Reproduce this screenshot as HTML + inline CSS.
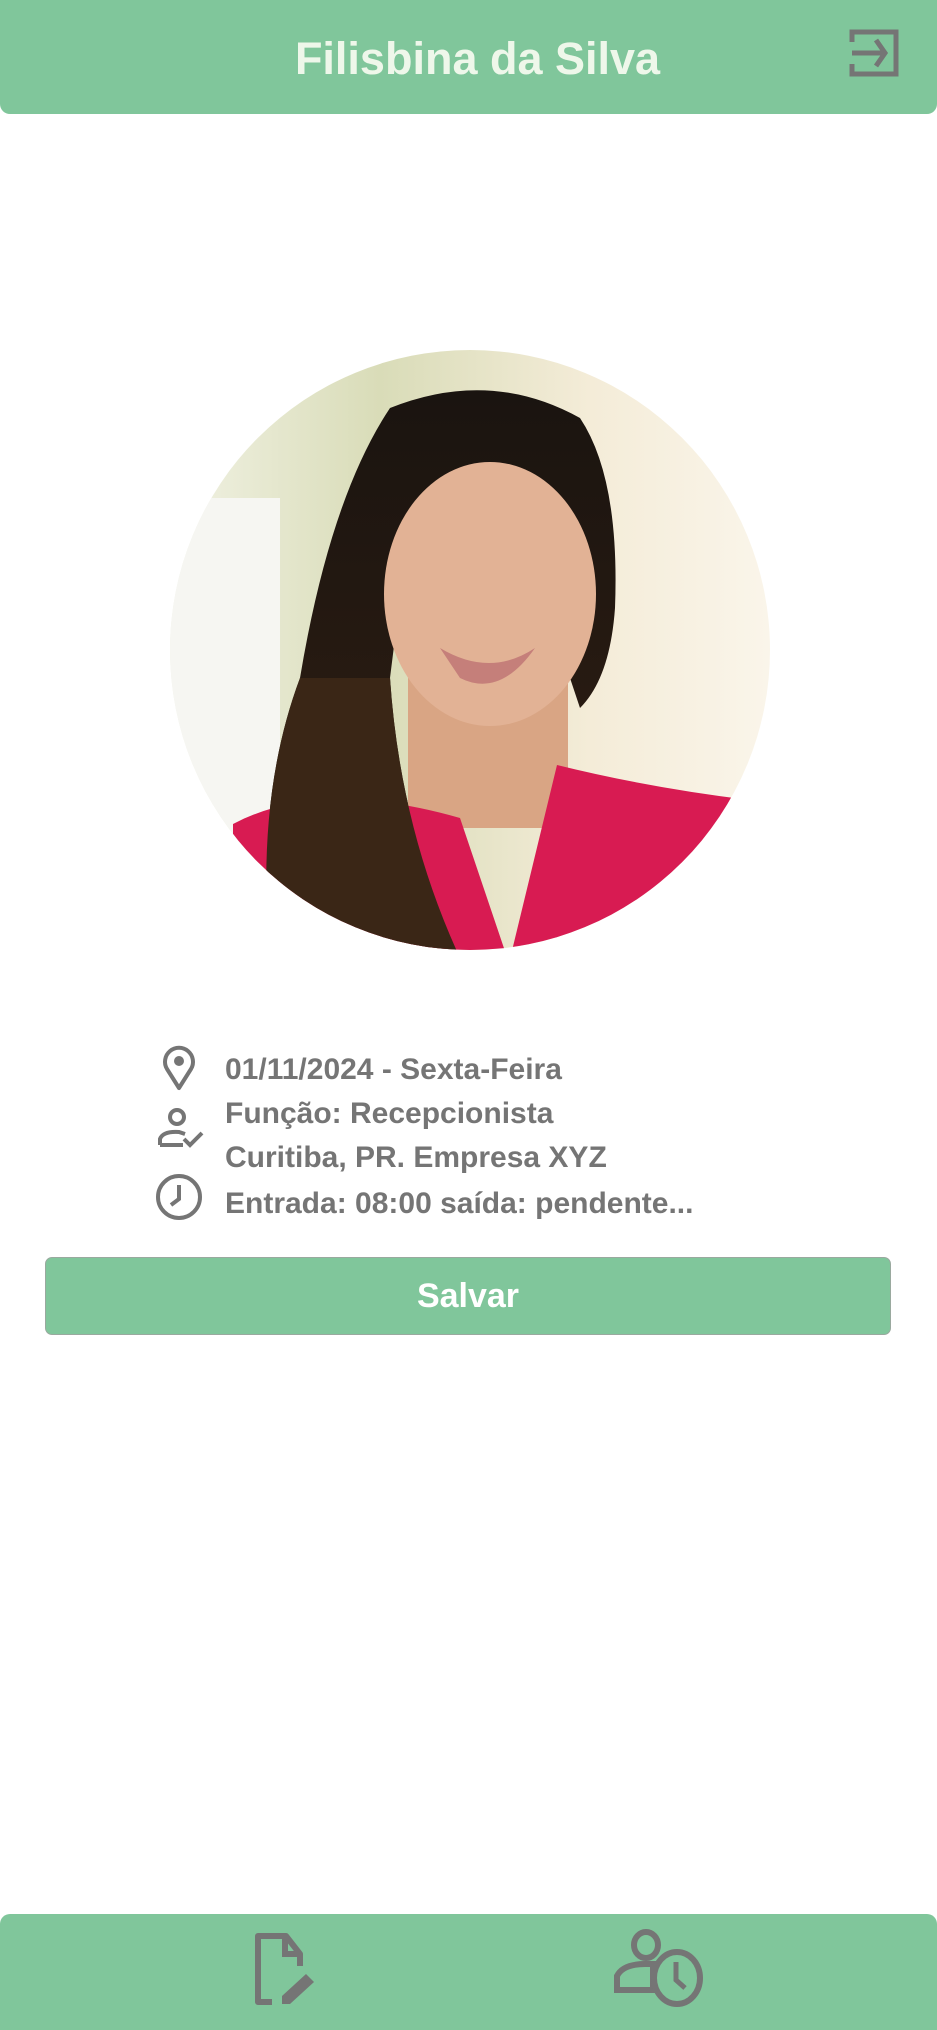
<!DOCTYPE html>
<html><head><meta charset="utf-8">
<style>
html,body{margin:0;padding:0;background:#fff;width:937px;height:2030px;overflow:hidden;font-family:"Liberation Sans",Arial,sans-serif;}
.hdr{position:absolute;left:0;top:0;width:937px;height:114px;background:#80c69b;border-radius:0 0 10px 10px;}
.hdr h1{margin:0;position:absolute;left:18px;right:0;top:34px;text-align:center;font-size:45px;font-weight:bold;color:#eef7ea;line-height:50px;}
.info{position:absolute;left:225px;font-size:30px;font-weight:bold;color:#757575;line-height:34px;}
.btn{position:absolute;left:45px;top:1257px;width:846px;height:78px;background:#80c69b;border:1px solid #9aa99f;border-radius:7px;box-sizing:border-box;text-align:center;color:#fff;font-weight:bold;font-size:34px;line-height:76px;}
.ftr{position:absolute;left:0;top:1914px;width:937px;height:116px;background:#80c69b;border-radius:10px 10px 0 0;}
</style></head><body>
<div class="hdr"><h1>Filisbina da Silva</h1>
<svg style="position:absolute;left:849px;top:28px" width="50" height="50" viewBox="0 0 50 50">
<path d="M3 14V4h44v42H3V36" fill="none" stroke="#757575" stroke-width="5"/>
<path d="M3 25h34M27 12l9 13-9 13" fill="none" stroke="#757575" stroke-width="5"/>
</svg></div>

<svg style="position:absolute;left:170px;top:348px" width="600" height="610" viewBox="0 0 600 610">
<defs>
<clipPath id="c"><circle cx="300" cy="302" r="300"/></clipPath>
<linearGradient id="bg" x1="0" y1="0" x2="1" y2="0"><stop offset="0" stop-color="#f1f2e4"/><stop offset="0.35" stop-color="#d9dcb8"/><stop offset="0.7" stop-color="#f4ecd8"/><stop offset="1" stop-color="#faf5ea"/></linearGradient>
<linearGradient id="hairg" x1="0" y1="0" x2="0" y2="1"><stop offset="0" stop-color="#1a1410"/><stop offset="0.7" stop-color="#2b1c12"/><stop offset="1" stop-color="#5a3a1e"/></linearGradient>
</defs>
<g clip-path="url(#c)">
<rect width="600" height="610" fill="url(#bg)"/>
<rect x="0" y="150" width="110" height="350" fill="#f6f6f2"/>
<path d="M220 60 Q320 20 410 70 Q450 130 445 260 Q440 330 410 360 L390 300 L400 180 Q320 120 240 170 L220 330 Q230 480 290 610 L100 610 Q85 450 130 330 Q160 150 220 60Z" fill="url(#hairg)"/>
<rect x="238" y="330" width="160" height="150" fill="#d9a584"/>
<ellipse cx="320" cy="246" rx="106" ry="132" fill="#e2b295"/>
<path d="M270 300 Q320 330 365 300 Q330 350 290 330Z" fill="#c57f7a"/>
<path d="M63 476 Q150 430 290 470 L339 615 L387 417 Q480 440 580 452 L600 610 L63 610Z" fill="#d81b52"/>
<path d="M100 610 Q85 450 130 330 L220 330 Q230 480 290 610Z" fill="#3a2616"/>
</g>
</svg>

<svg style="position:absolute;left:155px;top:1043px" width="48" height="48" viewBox="0 0 48 48">
<path d="M24 45 L12 26 A14 14 0 1 1 36 26Z" fill="none" stroke="#757575" stroke-width="4" stroke-linejoin="round"/>
<circle cx="24" cy="18" r="5" fill="#757575"/></svg>
<svg style="position:absolute;left:155px;top:1105px" width="52" height="46" viewBox="0 0 52 46">
<circle cx="22" cy="12" r="7" fill="none" stroke="#757575" stroke-width="4"/>
<path d="M5 40 V34 Q8 26 24 27 L30 29 M5 40 H28" fill="none" stroke="#757575" stroke-width="4"/>
<path d="M29 34 l6 6 l12-12" fill="none" stroke="#757575" stroke-width="4"/></svg>
<svg style="position:absolute;left:155px;top:1173px" width="48" height="48" viewBox="0 0 48 48">
<circle cx="24" cy="24" r="21" fill="none" stroke="#757575" stroke-width="4"/>
<path d="M24 12 V26 L16 32" fill="none" stroke="#757575" stroke-width="4"/></svg>

<div class="info" style="top:1053px">01/11/2024 - Sexta-Feira</div>
<div class="info" style="top:1097px">Função: Recepcionista</div>
<div class="info" style="top:1141px">Curitiba, PR. Empresa XYZ</div>
<div class="info" style="top:1187px">Entrada: 08:00 saída: pendente...</div>

<div class="btn">Salvar</div>

<div class="ftr">
<svg style="position:absolute;left:252px;top:18px" width="68" height="76" viewBox="0 0 68 76">
<path d="M20 70 H6 V4 H34 L48 22 V34" fill="none" stroke="#757575" stroke-width="6" stroke-linejoin="round"/>
<path d="M33 4 V22 H48" fill="none" stroke="#757575" stroke-width="6"/>
<path d="M30 72 V64 L54 42 L62 50 L38 72Z" fill="#757575"/></svg>
<svg style="position:absolute;left:613px;top:14px" width="96" height="80" viewBox="0 0 96 80">
<ellipse cx="33" cy="17" rx="12" ry="13" fill="none" stroke="#757575" stroke-width="6"/>
<path d="M4 62 V48 Q10 36 32 36 L40 36 V62Z" fill="none" stroke="#757575" stroke-width="6"/>
<ellipse cx="64" cy="50" rx="23" ry="26" fill="#80c69b" stroke="#757575" stroke-width="6"/>
<path d="M63 34 V52 L72 60" fill="none" stroke="#757575" stroke-width="5"/></svg>
</div>
</body></html>
